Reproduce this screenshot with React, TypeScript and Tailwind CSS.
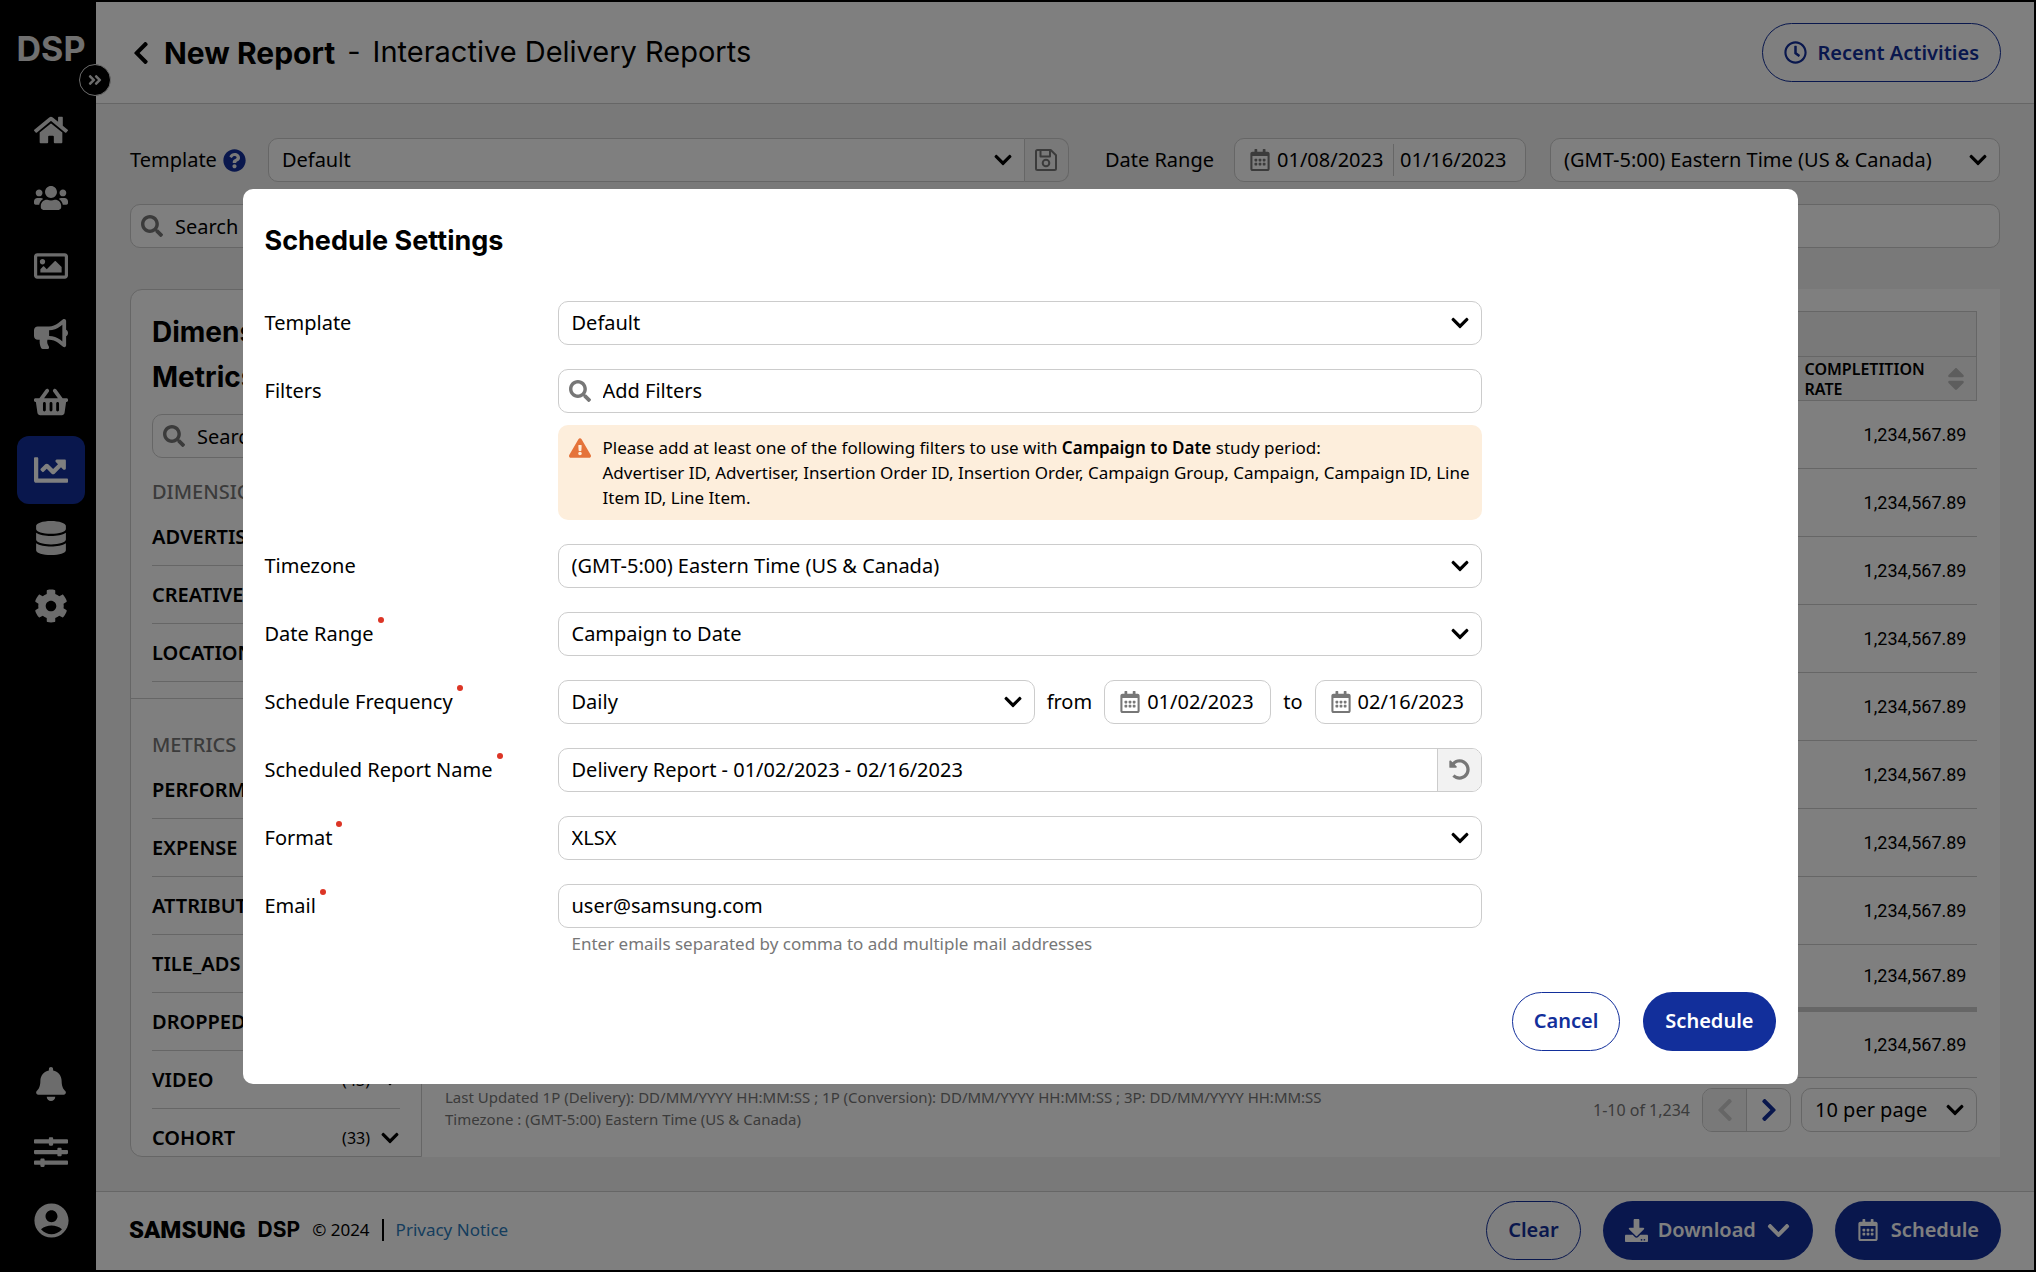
import { useState } from "react";
import type { ReactNode } from "react";
import type { IconType } from "react-icons";
import {
  FaAngleDoubleRight,
  FaBell,
  FaBullhorn,
  FaChartLine,
  FaChevronDown,
  FaChevronLeft,
  FaChevronRight,
  FaCog,
  FaDatabase,
  FaDownload,
  FaExclamationTriangle,
  FaHome,
  FaQuestionCircle,
  FaRegCalendarAlt,
  FaRegClock,
  FaRegImage,
  FaSearch,
  FaShoppingBasket,
  FaSlidersH,
  FaSort,
  FaUndoAlt,
  FaUsers,
} from "react-icons/fa";
import { MdAccountCircle } from "react-icons/md";

const mainNav: { label: string; icon: IconType; active?: boolean }[] = [
  { label: "Home", icon: FaHome },
  { label: "Audiences", icon: FaUsers },
  { label: "Creatives", icon: FaRegImage },
  { label: "Campaigns", icon: FaBullhorn },
  { label: "Marketplace", icon: FaShoppingBasket },
  { label: "Reports", icon: FaChartLine, active: true },
  { label: "Data", icon: FaDatabase },
  { label: "Settings", icon: FaCog },
];

const dimensions = ["ADVERTISER", "CREATIVE", "LOCATION"];

const metrics = [
  { name: "PERFORMANCE" },
  { name: "EXPENSE" },
  { name: "ATTRIBUTION" },
  { name: "TILE_ADS" },
  { name: "DROPPED" },
  { name: "VIDEO", count: 43 },
  { name: "COHORT", count: 33 },
];

const rows = Array.from({ length: 10 }, () => "1,234,567.89");

const field = "h-11 rounded-[10px] border border-[#ccc] bg-white";
const outlineButton =
  "flex h-[59px] items-center rounded-full border border-[#122f9b] bg-white font-semibold text-[#122f9b]";
const solidButton =
  "flex h-[59px] items-center rounded-full bg-[#122f9b] font-semibold text-white";

function SaveIcon() {
  return (
    <svg
      viewBox="0 0 24 24"
      className="size-6"
      fill="none"
      stroke="currentColor"
      strokeWidth="2"
      strokeLinejoin="round"
    >
      <path d="M3.5 2h13.2L22 7.3V20.5a1.500 1.500 0 0 1-1.500 1.500h-17A1.500 1.500 0 0 1 2 20.500v-17A1.500 1.500 0 0 1 3.500 2z" />
      <path d="M6.500 2.500v6h9.500v-6" />
      <circle cx="12" cy="15" r="3.300" />
    </svg>
  );
}

function Select({
  id,
  label,
  value,
  className = "",
}: {
  id: string;
  label?: string;
  value: string;
  className?: string;
}) {
  return (
    <div className={`relative ${className}`}>
      <select
        id={id}
        aria-label={label}
        defaultValue={value}
        className={`${field} w-full appearance-none pr-10 pl-[13px]`}
      >
        <option>{value}</option>
      </select>
      <FaChevronDown className="pointer-events-none absolute top-3 right-3 size-5" />
    </div>
  );
}

function SearchBox({
  id,
  label,
  placeholder,
}: {
  id: string;
  label?: string;
  placeholder: string;
}) {
  return (
    <div className="relative">
      <FaSearch className="pointer-events-none absolute top-[11px] left-[11px] size-[22px] text-[#777]" />
      <input
        id={id}
        aria-label={label}
        placeholder={placeholder}
        className={`${field} w-full pr-3 pl-11 placeholder:text-black`}
      />
    </div>
  );
}

function DateInput({
  label,
  defaultValue,
}: {
  label: string;
  defaultValue: string;
}) {
  return (
    <div className={`${field} flex w-[167px] items-center gap-1.5 pl-3.5`}>
      <FaRegCalendarAlt className="size-[22px] shrink-0 text-[#777]" />
      <input
        aria-label={label}
        defaultValue={defaultValue}
        className="w-full min-w-0 outline-none"
      />
    </div>
  );
}

function FormRow({
  label,
  htmlFor,
  required,
  children,
}: {
  label: string;
  htmlFor: string;
  required?: boolean;
  children: ReactNode;
}) {
  return (
    <div className="flex items-start">
      <label
        htmlFor={htmlFor}
        className="flex h-11 w-[293px] shrink-0 items-center"
      >
        {label}
        {required && (
          <span className="mb-7 ml-1 size-1.5 rounded-full bg-[#dc3526]" />
        )}
      </label>
      <div className="w-full max-w-[924px]">{children}</div>
    </div>
  );
}

function NavButton({
  label,
  icon: Icon,
  active,
}: {
  label: string;
  icon: IconType;
  active?: boolean;
}) {
  return (
    <button
      aria-label={label}
      className={`flex size-[68px] items-center justify-center rounded-xl ${
        active ? "bg-[#122f9b] text-white" : "text-[#d9d9d9]"
      }`}
    >
      <Icon className="size-[34px]" />
    </button>
  );
}

function Sidebar() {
  return (
    <nav className="relative flex w-24 shrink-0 flex-col items-center justify-between bg-black pb-4 pl-1.5">
      <div className="flex flex-col items-center">
        <div className="flex h-[94px] items-center font-[Inter] text-[34px] font-bold text-[#e0e0e0]">
          DSP
        </div>
        {mainNav.map((item) => (
          <NavButton key={item.label} {...item} />
        ))}
      </div>
      <div className="flex flex-col items-center">
        <NavButton label="Notifications" icon={FaBell} />
        <NavButton label="Preferences" icon={FaSlidersH} />
        <button
          aria-label="Account"
          className="flex size-[68px] items-center justify-center text-[#d9d9d9]"
        >
          <MdAccountCircle className="size-[41px]" />
        </button>
      </div>
      <button
        aria-label="Expand menu"
        className="absolute top-[62px] -right-[15px] flex size-8 items-center justify-center rounded-full border border-[#d9d9d9] bg-black text-[#d9d9d9]"
      >
        <FaAngleDoubleRight className="size-4" />
      </button>
    </nav>
  );
}

function DimensionPanel() {
  return (
    <aside className="flex w-[292px] shrink-0 flex-col overflow-hidden rounded-l-xl border border-[#ccc] bg-white">
      <div className="h-0 min-h-full">
        <div className="px-[21px]">
          <h2 className="pt-5 font-[Inter] text-[28px] leading-[45px] font-bold">
            Dimensions &amp; Metrics
          </h2>
          <div className="pt-3.5">
            <SearchBox id="dim-search" label="Search" placeholder="Search" />
          </div>
          <h3 className="pt-5 pb-0.5 leading-7 font-medium text-[#777]">
            DIMENSIONS
          </h3>
          <ul>
            {dimensions.map((name) => (
              <li
                key={name}
                className="flex h-[58px] items-center border-b border-[#ccc] font-semibold"
              >
                {name}
              </li>
            ))}
          </ul>
        </div>
        <div className="mt-4 border-t border-[#ccc] px-[21px]">
          <h3 className="pt-8 pb-0.5 leading-7 font-medium text-[#777]">
            METRICS
          </h3>
          <ul>
            {metrics.map((m) => (
              <li
                key={m.name}
                className="flex h-[58px] items-center justify-between border-b border-[#ccc] font-semibold"
              >
                {m.name}
                <span className="flex items-center gap-2.5 text-base font-normal">
                  {m.count && `(${m.count})`}
                  <FaChevronDown className="size-5" />
                </span>
              </li>
            ))}
          </ul>
        </div>
      </div>
    </aside>
  );
}

function ReportTable() {
  return (
    <section className="flex grow flex-col bg-white px-[23px] pt-[22px] pb-[23px]">
      <table className="w-full border-collapse">
        <thead className="bg-[#f2f2f2] text-base leading-5">
          <tr className="h-[45px]">
            <th colSpan={2} className="border border-[#ccc]" />
          </tr>
          <tr className="h-11">
            <th className="border-y border-l border-[#ccc]" />
            <th className="w-[180px] border-y border-r border-[#ccc] pr-1.5 pl-2 text-left font-semibold">
              <div className="flex items-center justify-between">
                COMPLETITION RATE
                <FaSort className="size-7 shrink-0 text-[#bbb]" />
              </div>
            </th>
          </tr>
        </thead>
        <tbody className="font-[Roboto] text-lg">
          {rows.map((value, i) => (
            <tr
              key={i}
              className={
                i === 8
                  ? "h-[65px] border-b-5 border-[#ccc]"
                  : "h-[68px] border-b border-[#ccc]"
              }
            >
              <td />
              <td className="pr-2.5 text-right">{value}</td>
            </tr>
          ))}
        </tbody>
      </table>
      <div className="mt-auto flex items-center">
        <p className="grow pb-1 text-[15px] leading-[22px] text-[#777]">
          Last Updated 1P (Delivery): DD/MM/YYYY HH:MM:SS ; 1P (Conversion):
          DD/MM/YYYY HH:MM:SS ; 3P: DD/MM/YYYY HH:MM:SS
          <br />
          Timezone : (GMT-5:00) Eastern Time (US &amp; Canada)
        </p>
        <span className="mr-3 text-base text-[#777]">1-10 of 1,234</span>
        <div className={`${field} mr-2.5 flex overflow-hidden`}>
          <button
            aria-label="Previous page"
            className="flex w-11 items-center justify-center border-r border-[#ccc] bg-[#f2f2f2] text-[#ccc]"
          >
            <FaChevronLeft className="size-[26px]" />
          </button>
          <button
            aria-label="Next page"
            className="flex w-[43px] items-center justify-center text-[#122f9b]"
          >
            <FaChevronRight className="size-[26px]" />
          </button>
        </div>
        <Select
          id="page-size"
          label="Rows per page"
          value="10 per page"
          className="w-44"
        />
      </div>
    </section>
  );
}

function ScheduleDialog() {
  const [reportName, setReportName] = useState(
    "Delivery Report - 01/02/2023 - 02/16/2023"
  );

  return (
    <form
      role="dialog"
      aria-modal="true"
      aria-labelledby="schedule-title"
      onSubmit={(e) => e.preventDefault()}
      className="w-full max-w-[1555px] rounded-[10px] bg-white px-[22px] pt-8 pb-[33px]"
    >
      <h2
        id="schedule-title"
        className="mb-10 font-[Inter] text-[27px] leading-10 font-bold"
      >
        Schedule Settings
      </h2>
      <div className="flex flex-col gap-6">
        <FormRow label="Template" htmlFor="template">
          <Select id="template" value="Default" />
        </FormRow>
        <FormRow label="Filters" htmlFor="filters">
          <SearchBox id="filters" placeholder="Add Filters" />
          <div className="mt-3 flex gap-3 rounded-[10px] bg-[#fdeedc] py-2.5 pr-1.5 pl-[11px]">
            <FaExclamationTriangle className="mt-0.5 size-[22px] shrink-0 text-[#e5733a]" />
            <p className="text-[17px] leading-[25px]">
              Please add at least one of the following filters to use with{" "}
              <b className="font-semibold">Campaign to Date</b> study period:
              <br />
              Advertiser ID, Advertiser, Insertion Order ID, Insertion Order,
              Campaign Group, Campaign, Campaign ID, Line Item ID, Line Item.
            </p>
          </div>
        </FormRow>
        <FormRow label="Timezone" htmlFor="timezone">
          <Select id="timezone" value="(GMT-5:00) Eastern Time (US & Canada)" />
        </FormRow>
        <FormRow label="Date Range" htmlFor="range" required>
          <Select id="range" value="Campaign to Date" />
        </FormRow>
        <FormRow label="Schedule Frequency" htmlFor="frequency" required>
          <div className="flex items-center gap-3">
            <Select id="frequency" value="Daily" className="grow" />
            <span>from</span>
            <DateInput label="Start date" defaultValue="01/02/2023" />
            <span>to</span>
            <DateInput label="End date" defaultValue="02/16/2023" />
          </div>
        </FormRow>
        <FormRow label="Scheduled Report Name" htmlFor="name" required>
          <div className={`${field} flex overflow-hidden`}>
            <input
              id="name"
              value={reportName}
              onChange={(e) => setReportName(e.target.value)}
              className="min-w-0 grow px-[13px] outline-none"
            />
            <button
              type="button"
              aria-label="Reset name"
              className="flex w-11 items-center justify-center border-l border-[#ccc] bg-[#f2f2f2] text-[#777]"
            >
              <FaUndoAlt className="size-[21px]" />
            </button>
          </div>
        </FormRow>
        <FormRow label="Format" htmlFor="format" required>
          <Select id="format" value="XLSX" />
        </FormRow>
        <FormRow label="Email" htmlFor="email" required>
          <input
            id="email"
            defaultValue="user@samsung.com"
            className={`${field} w-full px-[13px]`}
          />
          <p className="mt-1 px-3.5 text-[17px] leading-6 text-[#777]">
            Enter emails separated by comma to add multiple mail addresses
          </p>
        </FormRow>
      </div>
      <div className="mt-9 flex justify-end gap-[23px]">
        <button type="button" className={`${outlineButton} px-[21px]`}>
          Cancel
        </button>
        <button type="submit" className={`${solidButton} px-[22px]`}>
          Schedule
        </button>
      </div>
    </form>
  );
}

export default function App() {
  return (
    <div className="relative flex min-h-screen bg-black py-0.5 pr-0.5 font-['Noto_Sans',sans-serif] text-xl text-black">
      <Sidebar />
      <div className="flex min-w-0 grow flex-col bg-[#f2f2f2]">
        <header className="flex h-[102px] items-center border-b border-[#ccc] bg-white pr-[33px] pl-8 font-[Inter] text-[29px]">
          <button aria-label="Back" className="mr-2.5">
            <FaChevronLeft className="size-[26px]" />
          </button>
          <h1 className="text-[30px] font-bold">New Report</h1>
          <span className="mx-3">-</span>
          <span className="grow">Interactive Delivery Reports</span>
          <button
            className={`${outlineButton} gap-2.5 px-[21px] font-['Noto_Sans',sans-serif] text-xl`}
          >
            <FaRegClock className="size-[23px]" />
            Recent Activities
          </button>
        </header>

        <main className="flex grow flex-col px-[34px] pt-[34px] pb-[34px]">
          <div className="flex items-center">
            <label htmlFor="report-template">Template</label>
            <FaQuestionCircle className="mr-[22px] ml-1.5 size-[23px] text-[#122f9b]" />
            <div className="flex grow">
              <div className="relative grow">
                <select
                  id="report-template"
                  className="h-11 w-full appearance-none rounded-l-[10px] border border-[#ccc] bg-white pl-[13px]"
                >
                  <option>Default</option>
                </select>
                <FaChevronDown className="pointer-events-none absolute top-3 right-3 size-5" />
              </div>
              <button
                aria-label="Save template"
                className="flex h-11 w-11 items-center justify-center rounded-r-[10px] border border-l-0 border-[#ccc] bg-[#f2f2f2] text-[#777]"
              >
                <SaveIcon />
              </button>
            </div>
            <span className="mr-5 ml-9">Date Range</span>
            <div className={`${field} mr-6 flex w-[292px] items-center pl-3.5`}>
              <FaRegCalendarAlt className="mr-1.5 size-[22px] shrink-0 text-[#777]" />
              <input
                aria-label="From"
                defaultValue="01/08/2023"
                className="w-[116px]"
              />
              <span className="mr-1.5 h-8 border-l border-[#ccc]" />
              <input
                aria-label="To"
                defaultValue="01/16/2023"
                className="w-[116px]"
              />
            </div>
            <Select
              id="report-timezone"
              label="Timezone"
              value="(GMT-5:00) Eastern Time (US & Canada)"
              className="w-[450px] shrink-0"
            />
          </div>
          <div className="mt-[22px] mb-[41px]">
            <SearchBox id="report-search" label="Search" placeholder="Search" />
          </div>
          <div className="flex grow">
            <DimensionPanel />
            <ReportTable />
          </div>
        </main>

        <footer className="flex h-[79px] items-center border-t border-[#ccc] bg-white px-[33px] pb-0.5">
          <span className="font-[Roboto] text-2xl font-black">SAMSUNG</span>
          <span className="mx-3 font-[Inter] text-[21px] font-bold">DSP</span>
          <span className="text-[17px]">© 2024</span>
          <span className="mx-3 h-[22px] border-l-2 border-black" />
          <a href="#privacy" className="grow text-[17px] text-[#2b7bbb]">
            Privacy Notice
          </a>
          <div className="flex gap-[22px]">
            <button className={`${outlineButton} px-[21px]`}>Clear</button>
            <button className={`${solidButton} gap-2.5 px-[22px]`}>
              <FaDownload className="size-[23px]" />
              Download
              <FaChevronDown className="size-[25px]" />
            </button>
            <button className={`${solidButton} gap-3 px-[22px]`}>
              <FaRegCalendarAlt className="size-[22px]" />
              Schedule
            </button>
          </div>
        </footer>
      </div>

      <div className="absolute inset-0 flex items-center justify-center bg-black/50 pl-1">
        <ScheduleDialog />
      </div>
    </div>
  );
}
